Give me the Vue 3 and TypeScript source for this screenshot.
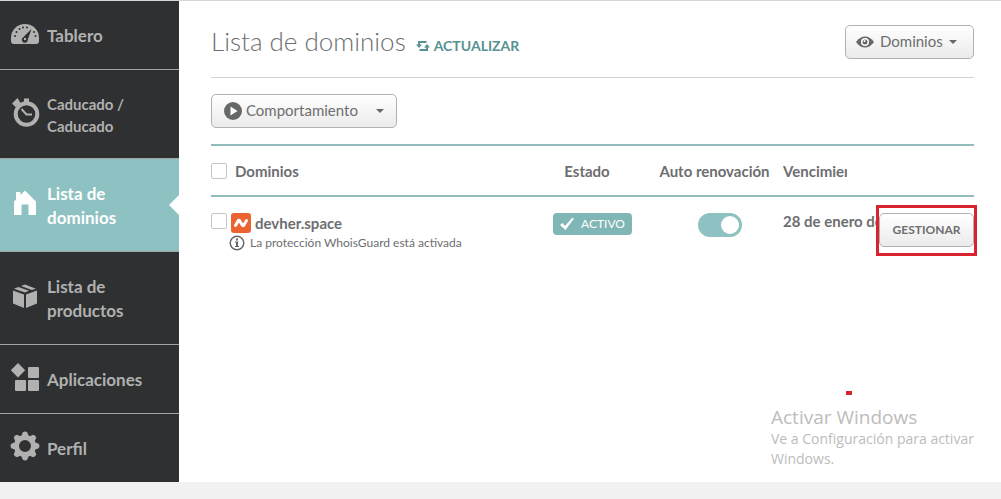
<script setup lang="ts">
import { ref } from 'vue'

type IconName = 'gauge' | 'timer' | 'home' | 'box' | 'apps' | 'gear'

interface NavItem {
  label: string
  icon: IconName
  active?: boolean
  compact?: boolean
}

const items: NavItem[] = [
  { label: 'Tablero', icon: 'gauge' },
  { label: 'Caducado / Caducado', icon: 'timer', compact: true },
  { label: 'Lista de dominios', icon: 'home', active: true },
  { label: 'Lista de productos', icon: 'box' },
  { label: 'Aplicaciones', icon: 'apps' },
  { label: 'Perfil', icon: 'gear' },
]

const allSelected = ref(false)
const rowSelected = ref(false)
const autoRenew = ref(true)
</script>

<template>
  <div class="page">
    <nav class="sidebar" aria-label="Principal">
      <a
        v-for="item in items"
        :key="item.label"
        href="#"
        class="nav-item"
        :class="{ active: item.active, compact: item.compact }"
      >
        <svg class="nav-icon" viewBox="0 0 30 30" aria-hidden="true">
          <g v-if="item.icon === 'gauge'">
            <path d="M1 20A14 14 0 0 1 29 20V23Q29 26 26 26H4Q1 26 1 23Z" />
            <g class="cut">
              <circle cx="5" cy="18" r="1" /><circle cx="6.500" cy="14" r="1" />
              <circle cx="9.500" cy="11" r="1" /><circle cx="13" cy="9.500" r="1" />
              <circle cx="17" cy="9.500" r="1" /><circle cx="24" cy="14" r="1" />
              <circle cx="25.500" cy="18" r="1" />
              <path d="M21.500 11L17.800 21.500A3 3 0 1 1 13.200 19.200Z" />
            </g>
            <circle cx="15" cy="21" r="1.200" />
          </g>
          <g v-else-if="item.icon === 'timer'">
            <circle class="ring" cx="16.500" cy="17" r="10.800" />
            <path d="M14 1.500H19V5.500H14Z" />
            <path d="M2 6.500L7.500 1L9 3.500L10.500 6L5.500 10Z" />
            <path class="hand" d="M11.500 12L16.500 17.500H22" />
          </g>
          <g v-else-if="item.icon === 'home'">
            <path d="M4 13.500L6 11.500V4H10.500V7L15 2.500L26 13.500V27H18.500V16.500H11.500V27H4Z" />
          </g>
          <g v-else-if="item.icon === 'box'">
            <path d="M3 9.500L14 13.500V27L3 22.500ZM27 9.500L16 13.500V27L27 22.500Z" />
            <path d="M4 7.800L8.300 6L19 9.800L15 11.600ZM11 5L15 3.400L26 7.700L21.800 9Z" />
          </g>
          <g v-else-if="item.icon === 'apps'">
            <path d="M8 1L15.200 8.200L8 15.400L.8 8.200Z" />
            <rect x="18" y="5" width="11" height="11" rx="1" />
            <rect x="5" y="18" width="11" height="11" rx="1" />
            <rect x="18" y="18" width="11" height="11" rx="1" />
          </g>
          <g v-else>
            <circle class="gear-body" cx="15" cy="15" r="8.500" />
            <path
              v-for="turn in 8"
              :key="turn"
              d="M11 6L12.800 1.300Q15 -.2 17.200 1.300L19 6Z"
              :transform="`rotate(${turn * 45} 15 15)`"
            />
          </g>
        </svg>
        <span class="nav-label">{{ item.label }}</span>
      </a>
    </nav>

    <main class="content">
      <header class="heading">
        <h1>Lista de dominios</h1>
        <a href="#" class="refresh">
          <svg viewBox="0 0 14 12" aria-hidden="true">
            <path class="line" d="M10.500 2H3V5M3.500 10H11V7" />
            <path d="M0 4.500H6L3 8ZM8 7.500H14L11 4Z" />
          </svg>
          ACTUALIZAR
        </a>
        <button type="button" class="btn view-btn">
          <svg class="eye" viewBox="0 0 18 12" aria-hidden="true">
            <path d="M0 6Q4 .5 9 .5T18 6Q14 11.500 9 11.500T0 6Z" />
            <circle class="white" cx="9" cy="6" r="4" />
            <circle cx="9" cy="6" r="2.500" />
            <circle class="white" cx="8.500" cy="5" r="1" />
          </svg>
          <span class="btn-label">Dominios</span>
          <i class="caret"></i>
        </button>
      </header>

      <button type="button" class="btn action-btn">
        <svg class="play" viewBox="0 0 18 18" aria-hidden="true">
          <circle cx="9" cy="9" r="9" />
          <path class="white" d="M6.500 4.500L13.500 9L6.500 13.500Z" />
        </svg>
        <span class="btn-label">Comportamiento</span>
        <i class="caret"></i>
      </button>

      <table class="domains">
        <colgroup>
          <col class="c-check" />
          <col />
          <col class="c-state" />
          <col class="c-auto" />
          <col class="c-date" />
          <col class="c-manage" />
        </colgroup>
        <thead>
          <tr>
            <th><input v-model="allSelected" type="checkbox" aria-label="Seleccionar todos" /></th>
            <th>Dominios</th>
            <th class="center">Estado</th>
            <th class="center">Auto renovación</th>
            <th class="clip">Vencimiento</th>
            <th></th>
          </tr>
        </thead>
        <tbody>
          <tr>
            <td><input v-model="rowSelected" type="checkbox" aria-label="Seleccionar devher.space" /></td>
            <td>
              <div class="domain">
                <svg class="logo" viewBox="0 0 20 20" aria-hidden="true">
                  <rect width="20" height="20" rx="3" />
                  <path d="M4.500 12.500L7.200 7.800Q8 6.800 8.700 7.800L11.300 12.200Q12 13.200 12.800 12.200L15.500 7.500" />
                </svg>
                <strong>devher.space</strong>
              </div>
              <div class="privacy">
                <svg class="info" viewBox="0 0 16 16" aria-hidden="true">
                  <circle class="info-ring" cx="8" cy="8" r="6.800" />
                  <path d="M7 3.500H9V5.500H7ZM6 6.500H9V11H10V12H6V11H7V7.500H6Z" />
                </svg>
                <span>La protección WhoisGuard está activada</span>
              </div>
            </td>
            <td class="center">
              <span class="badge">
                <svg viewBox="0 0 14 12" aria-hidden="true">
                  <path d="M0 7L2.500 5L5 8L12 0L14 .5L5.500 12Z" />
                </svg>
                ACTIVO
              </span>
            </td>
            <td class="center">
              <input v-model="autoRenew" class="switch" type="checkbox" role="switch" aria-label="Auto renovación" />
            </td>
            <td class="date">28 de enero de</td>
            <td>
              <div class="manage">
                <button type="button" class="btn manage-btn">GESTIONAR</button>
                <span class="highlight"></span>
              </div>
            </td>
          </tr>
        </tbody>
      </table>

      <span class="mark"></span>
      <aside class="activation">
        <p class="activation-title">Activar Windows</p>
        <p>Ve a Configuración para activar Windows.</p>
      </aside>
    </main>
  </div>
</template>

<style>
body {
  margin: 0;
  background: #f1f1f1;
}
</style>

<style scoped>
* {
  box-sizing: border-box;
}

.page {
  display: grid;
  grid-template-columns: 179px 1fr;
  border-top: 1px solid #d4d5d6;
  background: #fff;
  color: #6d6e70;
  font: 15px/20px Lato, "Open Sans", sans-serif;
}

.sidebar {
  background: #2f3031;
}

.nav-item {
  position: relative;
  display: flex;
  align-items: center;
  gap: 7px;
  padding: 23px 40px 21px 10px;
  border-bottom: 1px solid #a1a3a4;
  color: #b0b1b0;
  font-size: 17px;
  font-weight: 700;
  line-height: 24px;
  text-decoration: none;
}

.nav-item:last-child {
  padding-right: 10px;
  border-bottom: 0;
}

.nav-item.compact {
  font-size: 15px;
  line-height: 22px;
}

.nav-item.active {
  background: #8ec1c1;
  color: #fff;
}

.nav-item.active::after {
  content: "";
  position: absolute;
  top: 50%;
  right: 0;
  margin-top: -10px;
  border: solid transparent;
  border-width: 10px 10px 10px 0;
  border-right-color: #fff;
}

.nav-icon {
  flex: none;
  width: 30px;
  height: 30px;
  margin: -9px 0 -3px;
  fill: currentColor;
}

.cut {
  fill: #2f3031;
}

.ring,
.gear-body {
  fill: none;
  stroke: currentColor;
  stroke-width: 4;
}

.gear-body {
  stroke-width: 5;
}

.hand {
  fill: none;
  stroke: currentColor;
  stroke-width: 2;
}

.content {
  position: relative;
  padding: 24px 27px 0 32px;
}

.heading {
  display: flex;
  align-items: center;
  height: 53px;
  padding-bottom: 19px;
  border-bottom: 1px solid #d1d2d3;
}

h1 {
  margin: 0;
  padding-bottom: 2px;
  font-size: 26px;
  font-weight: 300;
  line-height: 32px;
}

.refresh {
  display: flex;
  align-items: center;
  gap: 4px;
  margin: 8px auto 0 10px;
  color: #569291;
  font-size: 14px;
  font-weight: 700;
  text-decoration: none;
}

.refresh svg {
  width: 14px;
  height: 12px;
  fill: currentColor;
}

.line {
  fill: none;
  stroke: currentColor;
  stroke-width: 2;
}

.btn {
  display: flex;
  align-items: center;
  height: 34px;
  border: 1px solid #b0b1b2;
  border-radius: 5px;
  background: linear-gradient(#fff, #ebebeb);
  color: #6d6e70;
  font-family: inherit;
  font-size: 15px;
  line-height: 20px;
}

.btn-label {
  padding-bottom: 2px;
}

.btn svg {
  fill: #666768;
}

.btn .white {
  fill: #fff;
}

.view-btn {
  width: 129px;
  padding: 0 16px 0 10px;
}

.eye {
  width: 18px;
  height: 12px;
  margin-right: 6px;
}

.action-btn {
  width: 186px;
  margin-top: 16px;
  padding: 0 12px;
}

.play {
  width: 18px;
  height: 18px;
  margin-right: 4px;
}

.caret {
  margin-left: auto;
  border: solid transparent;
  border-width: 4px 4px 0;
  border-top-color: #666768;
}

.domains {
  width: 100%;
  margin-top: 16px;
  border-collapse: separate;
  border-spacing: 0;
  table-layout: fixed;
}

.c-check {
  width: 24px;
}

.c-state {
  width: 118px;
}

.c-auto {
  width: 137px;
}

.c-date {
  width: 64px;
}

.c-manage {
  width: 127px;
}

th {
  height: 53px;
  padding: 0;
  border: solid #92bcbb;
  border-width: 2px 0;
  font-weight: 700;
  text-align: left;
  white-space: nowrap;
}

td {
  padding: 16px 0 0;
  vertical-align: top;
}

th.center,
td.center {
  text-align: center;
}

td.center {
  padding-left: 11px;
}

.clip {
  overflow: hidden;
}

input {
  display: block;
  width: 16px;
  height: 16px;
  margin: 0;
  border: 1px solid #c5c6c7;
  border-radius: 2px;
  background: #fff;
  appearance: none;
}

input:checked {
  background: #8ec1c1;
}

.domain {
  display: flex;
  align-items: center;
  gap: 4px;
  height: 20px;
  margin-left: -4px;
}

.logo {
  width: 20px;
  height: 20px;
  fill: #ec6332;
}

.logo path {
  fill: none;
  stroke: #fff;
  stroke-width: 3;
  stroke-linecap: round;
}

.privacy {
  display: flex;
  align-items: center;
  gap: 5px;
  margin-left: -6px;
  font-size: 12px;
}

.info {
  width: 16px;
  height: 16px;
  fill: #666768;
}

.info-ring {
  fill: none;
  stroke: #666768;
  stroke-width: 1.5;
}

.badge {
  display: flex;
  align-items: center;
  gap: 7px;
  width: max-content;
  height: 22px;
  margin: 0 auto;
  padding: 0 7px;
  border-radius: 4px;
  background: #80b6b5;
  color: #fff;
  font-size: 12px;
}

.badge svg {
  width: 14px;
  height: 12px;
  fill: currentColor;
}

.switch {
  width: 44px;
  height: 24px;
  margin: 0 auto;
  padding: 3px;
  border: 0;
  border-radius: 12px;
  background: #c5c6c7;
}

.switch::before {
  content: "";
  display: block;
  width: 18px;
  height: 18px;
  border-radius: 9px;
  background: #fff;
}

.switch:checked::before {
  margin-left: auto;
}

.date {
  font-weight: 700;
  line-height: 16px;
  white-space: nowrap;
}

.manage {
  position: relative;
  width: 95px;
  margin-left: auto;
}

.manage-btn {
  justify-content: center;
  width: 100%;
  padding: 0;
  font-size: 12px;
  font-weight: 700;
}

.highlight {
  position: absolute;
  inset: -8px -3px -9px;
  border: 3px solid #d9232e;
  pointer-events: none;
}

.mark {
  position: absolute;
  right: 149px;
  bottom: 87px;
  width: 6px;
  height: 4px;
  background: #d9232e;
}

.activation {
  position: absolute;
  right: 10px;
  bottom: 13px;
  width: 220px;
  color: #bcbcbc;
  font: 14px/20px "Open Sans", "Noto Sans", sans-serif;
}

.activation p {
  margin: 0;
}

.activation .activation-title {
  font-size: 19px;
  line-height: 24px;
}
</style>
